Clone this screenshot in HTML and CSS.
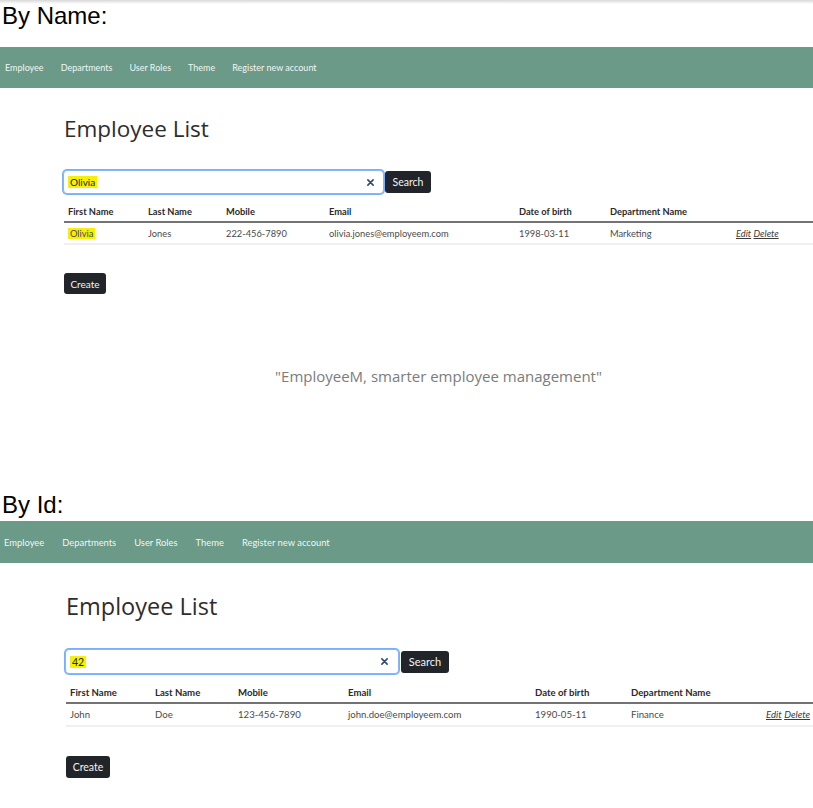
FILE: index.html
```html
<!DOCTYPE html>
<html lang="en">
<head>
<meta charset="utf-8">
<title>Employee List</title>
<link rel="stylesheet" href="styles.css">
</head>
<body>
<div class="topshade"></div>

<section class="shot shot-a">
  <div class="shot-label">By Name:</div>
  <nav class="navbar">
    <a class="nav-link">Employee</a>
    <a class="nav-link">Departments</a>
    <a class="nav-link">User Roles</a>
    <a class="nav-link">Theme</a>
    <a class="nav-link">Register new account</a>
  </nav>
  <main class="content">
    <h1 class="page-title">Employee List</h1>
    <div class="search-row">
      <div class="search-box">
        <span class="hl">Olivia</span>
        <svg class="clear" viewBox="0 0 8 8"><path d="M1 1L7 7M7 1L1 7"/></svg>
      </div>
      <button class="btn btn-search">Search</button>
    </div>
    <table class="emp-table">
      <thead>
        <tr>
          <th class="c1">First Name</th>
          <th class="c2">Last Name</th>
          <th class="c3">Mobile</th>
          <th class="c4">Email</th>
          <th class="c5">Date of birth</th>
          <th class="c6">Department Name</th>
          <th class="c7"></th>
        </tr>
      </thead>
      <tbody>
        <tr>
          <td><span class="hl">Olivia</span></td>
          <td>Jones</td>
          <td>222-456-7890</td>
          <td>olivia.jones@employeem.com</td>
          <td>1998-03-11</td>
          <td>Marketing</td>
          <td class="actions"><a>Edit</a> <a>Delete</a></td>
        </tr>
      </tbody>
    </table>
    <button class="btn btn-create">Create</button>
  </main>
  <footer class="tagline">"EmployeeM, smarter employee management"</footer>
</section>

<section class="shot shot-b">
  <div class="shot-label">By Id:</div>
  <nav class="navbar">
    <a class="nav-link">Employee</a>
    <a class="nav-link">Departments</a>
    <a class="nav-link">User Roles</a>
    <a class="nav-link">Theme</a>
    <a class="nav-link">Register new account</a>
  </nav>
  <main class="content">
    <h1 class="page-title">Employee List</h1>
    <div class="search-row">
      <div class="search-box">
        <span class="hl">42</span>
        <svg class="clear" viewBox="0 0 8 8"><path d="M1 1L7 7M7 1L1 7"/></svg>
      </div>
      <button class="btn btn-search">Search</button>
    </div>
    <table class="emp-table">
      <thead>
        <tr>
          <th class="c1">First Name</th>
          <th class="c2">Last Name</th>
          <th class="c3">Mobile</th>
          <th class="c4">Email</th>
          <th class="c5">Date of birth</th>
          <th class="c6">Department Name</th>
          <th class="c7"></th>
        </tr>
      </thead>
      <tbody>
        <tr>
          <td>John</td>
          <td>Doe</td>
          <td>123-456-7890</td>
          <td>john.doe@employeem.com</td>
          <td>1990-05-11</td>
          <td>Finance</td>
          <td class="actions"><a>Edit</a> <a>Delete</a></td>
        </tr>
      </tbody>
    </table>
    <button class="btn btn-create">Create</button>
  </main>
</section>
</body>
</html>
```

FILE: styles.css
```css
html, body {
  margin: 0;
  padding: 0;
  overflow: hidden;
  background: #ffffff;
}
body {
  width: 813px;
  height: 808px;
  position: relative;
  font-family: "Lato", "Liberation Sans", sans-serif;
  color: #212529;
}
.topshade {
  position: absolute;
  left: 0;
  top: 0;
  width: 813px;
  height: 4px;
  background: linear-gradient(#d8d8d8, rgba(255,255,255,0));
}

.shot-label {
  font-family: "Liberation Sans", Arial, sans-serif;
  font-size: 24px;
  line-height: 28px;
  color: #000;
  padding-left: 2px;
}

.navbar {
  display: flex;
  align-items: center;
  background: #6b9b88;
  width: 812px;
}
.nav-link {
  color: rgba(255,255,255,0.93);
  text-decoration: none;
  white-space: nowrap;
}

.content {
  display: flex;
  flex-direction: column;
  align-items: flex-start;
}
.page-title {
  margin: 0;
  font-family: "Open Sans", "DejaVu Sans", sans-serif;
  font-weight: 400;
  color: #2d2d2d;
}
.search-row {
  display: flex;
  align-items: center;
}
.search-box {
  box-sizing: border-box;
  display: flex;
  align-items: center;
  justify-content: space-between;
  border: 1px solid #86b7fe;
  border-radius: 4px;
  box-shadow: 0 0 0 1px rgba(13,110,253,0.55);
  background: #fff;
  color: #212529;
}
.hl {
  background: #f6ef0a;
  padding: 0 2px;
}
.clear {
  fill: none;
  stroke: #2e4a72;
  stroke-width: 1.8;
  stroke-linecap: round;
}
.btn {
  font-family: "Lato", "Liberation Sans", sans-serif;
  background: #212529;
  color: #f4f4f4;
  border: 0;
  border-radius: 3px;
  padding: 0;
}

.emp-table {
  border-collapse: collapse;
  table-layout: fixed;
  color: #212529;
}
.emp-table th {
  text-align: left;
  font-weight: 700;
  color: #2a2a2a;
  border-bottom: 2px solid #737373;
  white-space: nowrap;
}
.emp-table td {
  color: #4a4a4a;
  border-bottom: 2px solid #f0f0f0;
  white-space: nowrap;
}
.actions a {
  font-style: italic;
  text-decoration: underline;
  color: #3a3a3a;
}

.tagline {
  font-family: "Open Sans", "DejaVu Sans", sans-serif;
  color: #7c7c7c;
  text-align: center;
}

/* ---------- Shot A (By Name) ---------- */
.shot-a .shot-label {
  padding-top: 2px;
}
.shot-a .navbar {
  margin-top: 17px;
  height: 41px;
  gap: 17px;
  padding-left: 5px;
  font-size: 9px;
}
.shot-a .content {
  padding-left: 64px;
  padding-top: 27px;
}
.shot-a .page-title {
  font-size: 22.5px;
  line-height: 28px;
}
.shot-a .search-row {
  margin-top: 27px;
  margin-left: -1px;
  gap: 1px;
}
.shot-a .search-box {
  width: 321px;
  height: 24px;
  padding: 0 9px 0 4px;
  font-size: 10px;
}
.shot-a .clear {
  width: 7px;
  height: 7px;
}
.shot-a .btn-search {
  width: 46px;
  height: 22px;
  font-size: 10.5px;
}
.shot-a .emp-table {
  margin-top: 8px;
  width: 768px;
  font-size: 9.3px;
}
.shot-a .emp-table th {
  height: 19px;
  padding: 0 4px;
  vertical-align: middle;
}
.shot-a .emp-table td {
  height: 20px;
  padding: 0 4px;
}
.shot-a .c1 { width: 72px; }
.shot-a .c2 { width: 70px; }
.shot-a .c3 { width: 95px; }
.shot-a .c4 { width: 182px; }
.shot-a .c5 { width: 83px; }
.shot-a .c6 { width: 118px; }
.shot-a .c7 { width: 92px; }
.shot-a .btn-create {
  margin-top: 28px;
  width: 42px;
  height: 21px;
  font-size: 10px;
}
.shot-a .tagline {
  margin-top: 72px;
  padding-left: 64px;
  font-size: 15px;
  line-height: 20px;
}

/* ---------- Shot B (By Id) ---------- */
.shot-b {
  margin-top: 105px;
}
.shot-b .navbar {
  margin-top: 2px;
  height: 42px;
  gap: 18px;
  padding-left: 4px;
  font-size: 9.4px;
}
.shot-b .content {
  padding-left: 66px;
  padding-top: 29px;
}
.shot-b .page-title {
  font-size: 23.5px;
  line-height: 29px;
}
.shot-b .search-row {
  margin-top: 28px;
  margin-left: -1px;
  gap: 2px;
}
.shot-b .search-box {
  width: 334px;
  height: 25px;
  padding: 0 10px 0 4px;
  font-size: 10.5px;
}
.shot-b .clear {
  width: 7px;
  height: 7px;
}
.shot-b .btn-search {
  width: 48px;
  height: 22px;
  font-size: 11px;
}
.shot-b .emp-table {
  margin-top: 9px;
  width: 796px;
  font-size: 9.6px;
}
.shot-b .emp-table th {
  height: 19px;
  padding: 0 4px;
}
.shot-b .emp-table td {
  height: 21px;
  padding: 0 4px;
}
.shot-b .c1 { width: 77px; }
.shot-b .c2 { width: 75px; }
.shot-b .c3 { width: 102px; }
.shot-b .c4 { width: 179px; }
.shot-b .c5 { width: 88px; }
.shot-b .c6 { width: 127px; }
.shot-b .c7 { width: 92px; }
.shot-b .btn-create {
  margin-top: 29px;
  width: 44px;
  height: 22px;
  font-size: 10.5px;
}
```
